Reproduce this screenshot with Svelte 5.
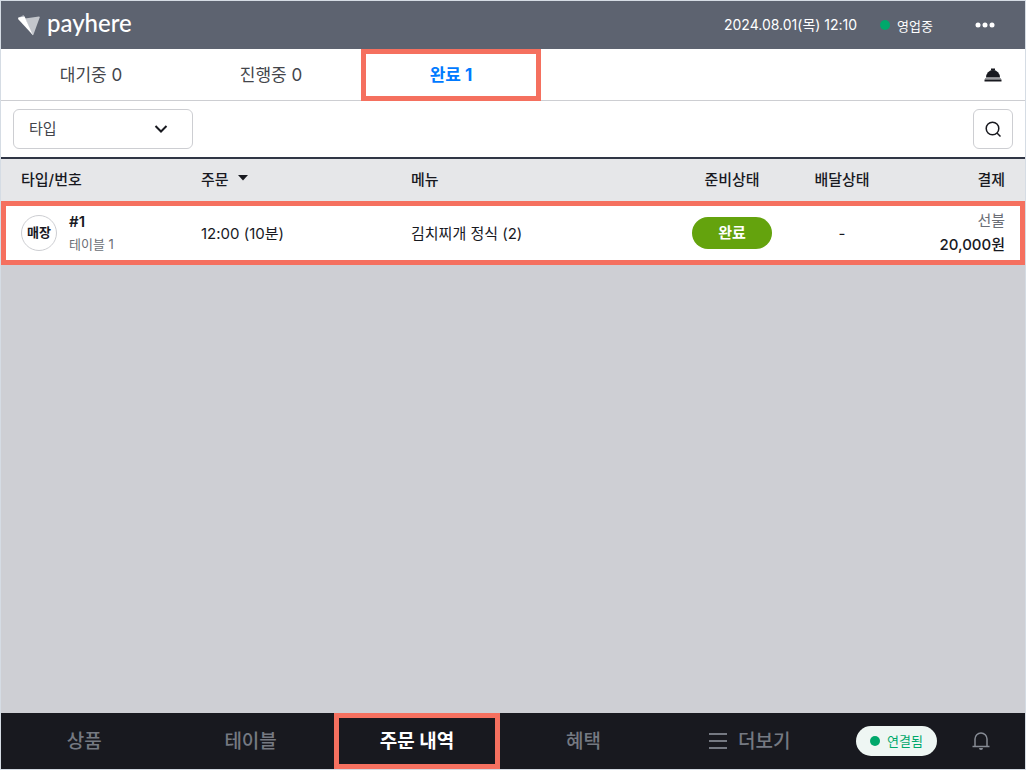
<script lang="ts">
	type Order = {
		id: number;
		type: string;
		table: string;
		time: string;
		menu: string;
		status: string;
		delivery: string;
		payType: string;
		amount: string;
	};

	const tabs = [
		{ label: '대기중', count: 0 },
		{ label: '진행중', count: 0 },
		{ label: '완료', count: 1 }
	];
	const navItems = ['상품', '테이블', '주문 내역', '혜택', '더보기'];

	const orders: Order[] = [
		{
			id: 1,
			type: '매장',
			table: '테이블 1',
			time: '12:00 (10분)',
			menu: '김치찌개 정식 (2)',
			status: '완료',
			delivery: '-',
			payType: '선불',
			amount: '20,000원'
		}
	];

	let activeTab = $state(2);
	let activeNav = $state(2);
</script>

<div class="app">
	<header>
		<a class="logo" href="#home">
			<svg width="24" height="24" viewBox="0 0 24 24" aria-hidden="true">
				<path d="M1 5 6.500 2 9 6Z" fill="#a9aeb7" />
				<path d="M8 5.500 22 3.500Q23.500 3.500 22.500 5L16.500 21.500Q16 23 15 21.500Z" fill="#c3c6cc" />
				<path d="M1.500 4.500 7.500 3.500 15.800 22 1.500 6.500Q0.500 5 1.500 4.500Z" fill="#fff" />
			</svg>
			<span>payhere</span>
		</a>
		<time datetime="2024-08-01T12:10">2024.08.01(목) 12:10</time>
		<span class="open"><i class="dot"></i>영업중</span>
		<button class="icon-button more" aria-label="메뉴 열기">
			<svg width="20" height="6" viewBox="0 0 20 6" fill="#fff">
				<circle cx="3" cy="3" r="2.500" />
				<circle cx="10" cy="3" r="2.500" />
				<circle cx="17" cy="3" r="2.500" />
			</svg>
		</button>
	</header>

	<div class="tabs">
		{#each tabs as tab, i (tab.label)}
			<button class="tab" class:active={activeTab === i} onclick={() => (activeTab = i)}>
				{tab.label} {tab.count}
			</button>
		{/each}
		<button class="icon-button bell-desk" aria-label="호출">
			<svg width="18" height="14" viewBox="0 0 18 14">
				<path d="M7 0.500h4v2H7z" fill="#18191f" />
				<path d="M2 9.500a7 7.500 0 0 1 14 0z" fill="#18191f" />
				<path d="M1 10h16v1.500H1z" fill="#9b9da1" />
				<path d="M0.500 11.500h17v2H0.500z" fill="#18191f" />
			</svg>
		</button>
	</div>

	<div class="filters">
		<div class="select">
			<select aria-label="타입">
				<option>타입</option>
			</select>
			<svg width="14" height="10" viewBox="0 0 14 10" fill="none" aria-hidden="true">
				<path d="m1.500 2 5.500 5.500L12.500 2" stroke="#18191f" stroke-width="2" />
			</svg>
		</div>
		<button class="search" aria-label="검색">
			<svg width="16" height="16" viewBox="0 0 16 16" fill="none" stroke="#18191f" stroke-width="1.500">
				<circle cx="7.500" cy="7.500" r="6.300" />
				<path d="m12 12 3.500 3.500" />
			</svg>
		</button>
	</div>

	<main>
		<table>
			<thead>
				<tr>
					<th class="col-type">타입/번호</th>
					<th class="col-time">
						<button class="sort">
							주문
							<svg width="10" height="6" viewBox="0 0 10 6" aria-hidden="true">
								<path d="M0 0h10L5 5.500z" fill="#18191f" />
							</svg>
						</button>
					</th>
					<th>메뉴</th>
					<th class="col-status">준비상태</th>
					<th class="col-status">배달상태</th>
					<th class="col-pay">결제</th>
				</tr>
			</thead>
			<tbody>
				{#each orders as order (order.id)}
					<tr class="highlight">
						<td>
							<div class="order">
								<span class="type">{order.type}</span>
								<div>
									<strong>#{order.id}</strong>
									<small>{order.table}</small>
								</div>
							</div>
						</td>
						<td>{order.time}</td>
						<td>{order.menu}</td>
						<td class="col-status"><span class="badge">{order.status}</span></td>
						<td class="col-status">{order.delivery}</td>
						<td class="col-pay">
							<span class="pay-type">{order.payType}</span>
							<span class="amount">{order.amount}</span>
						</td>
					</tr>
				{/each}
			</tbody>
		</table>
	</main>

	<nav>
		{#each navItems as item, i (item)}
			<button class="nav-item" class:active={activeNav === i} onclick={() => (activeNav = i)}>
				{#if item === '더보기'}
					<svg width="18" height="16" viewBox="0 0 18 16" stroke="currentColor" stroke-width="1.800" aria-hidden="true">
						<path d="M0 1h18M0 8h18M0 15h18" />
					</svg>
				{/if}
				<span>{item}</span>
			</button>
		{/each}
		<div class="nav-side">
			<span class="connected"><i class="dot"></i>연결됨</span>
			<button class="icon-button" aria-label="알림">
				<svg width="18" height="20" viewBox="0 0 18 20" fill="none" stroke="#868b94" stroke-width="1.500">
					<path d="M0.500 15.500h17M3 15.500V8a6 6 0 0 1 12 0v7.500" />
					<path d="M7 17a2 2 0 0 0 4 0z" fill="#868b94" stroke="none" />
				</svg>
			</button>
		</div>
	</nav>
</div>

<style>
	:global(body) {
		margin: 0;
	}

	.app {
		box-sizing: border-box;
		min-height: 100vh;
		display: flex;
		flex-direction: column;
		border: 1px solid #d5dce4;
		background: #fff;
		color: #18191f;
		font-family: Inter, 'Noto Sans CJK KR', sans-serif;
		font-size: 15px;
	}

	button,
	select {
		border: 0;
		padding: 0;
		background: none;
		color: inherit;
		font: inherit;
		cursor: pointer;
	}

	svg {
		display: block;
		flex: none;
	}

	.icon-button {
		display: flex;
		align-items: center;
		justify-content: center;
		width: 40px;
		height: 40px;
	}

	.dot {
		width: 10px;
		height: 10px;
		border-radius: 50%;
		background: #00a86b;
	}

	header {
		display: flex;
		align-items: center;
		height: 48px;
		padding: 0 20px 0 16px;
		background: #5d6370;
		color: #fff;
		font-size: 14px;
	}

	header time {
		padding-bottom: 2px;
	}

	.logo {
		display: flex;
		align-items: center;
		gap: 6px;
		margin-right: auto;
		color: #fff;
		font-family: Lato, sans-serif;
		font-size: 24px;
		font-weight: 500;
		line-height: 24px;
		text-decoration: none;
	}

	.logo span {
		padding-bottom: 4px;
	}

	.open {
		display: flex;
		align-items: center;
		gap: 7px;
		margin: 0 32px 0 23px;
		font-size: 13px;
	}

	.tabs {
		display: flex;
		align-items: center;
		height: 51px;
		border-bottom: 1px solid #cdced2;
	}

	.tab {
		width: 180px;
		height: 52px;
		margin-bottom: -1px;
		padding-bottom: 4px;
		color: #43454b;
		font-size: 17px;
	}

	.tab.active {
		outline: 5px solid #f5705f;
		outline-offset: -5px;
		color: #007aff;
		font-weight: 700;
	}

	.bell-desk {
		margin: 0 12px 0 auto;
	}

	.filters {
		display: flex;
		align-items: center;
		justify-content: space-between;
		height: 56px;
		padding: 0 12px;
		border-bottom: 2px solid #303645;
	}

	.select {
		position: relative;
	}

	.select select {
		display: block;
		width: 180px;
		height: 40px;
		padding: 0 15px 2px;
		border: 1px solid #cdced2;
		border-radius: 6px;
		color: #43454b;
		appearance: none;
	}

	.select svg {
		position: absolute;
		top: 15px;
		right: 25px;
		pointer-events: none;
	}

	.search {
		display: flex;
		align-items: center;
		justify-content: center;
		width: 40px;
		height: 40px;
		border: 1px solid #cdced2;
		border-radius: 6px;
	}

	main {
		flex: 1;
		background: #cecfd4;
	}

	table {
		width: 100%;
		border-collapse: collapse;
		table-layout: fixed;
	}

	th,
	td {
		padding: 0 20px 2px;
		text-align: left;
	}

	th {
		height: 38px;
		padding-bottom: 4px;
		background: #e6e7e9;
		font-weight: 500;
	}

	td {
		height: 62px;
		background: #fff;
	}

	.col-type {
		width: 140px;
	}

	.col-time {
		width: 170px;
	}

	.col-status {
		width: 110px;
		padding-right: 0;
		padding-left: 0;
		text-align: center;
	}

	.col-pay {
		width: 88px;
		text-align: right;
	}

	td.col-status,
	td.col-pay,
	td:first-child {
		height: 64px;
		padding-bottom: 0;
	}

	.highlight {
		outline: 5px solid #f5705f;
		outline-offset: -5px;
	}

	.sort {
		display: flex;
		align-items: center;
		gap: 9px;
	}

	.order {
		display: flex;
		align-items: center;
		gap: 12px;
	}

	.type {
		box-sizing: border-box;
		width: 36px;
		height: 36px;
		border: 1px solid #cdced2;
		border-radius: 50%;
		font-size: 13px;
		font-weight: 700;
		line-height: 33px;
		text-align: center;
	}

	.order strong,
	.order small {
		display: block;
		line-height: 22px;
	}

	.order strong {
		font-weight: 600;
	}

	.order small {
		color: #6b6e76;
		font-size: 13px;
	}

	.badge {
		display: inline-block;
		width: 80px;
		border-radius: 16px;
		background: #64a30d;
		color: #fff;
		font-weight: 700;
		line-height: 32px;
		vertical-align: middle;
	}

	.pay-type,
	.amount {
		display: block;
		line-height: 24px;
	}

	.pay-type {
		color: #6b6e76;
	}

	.amount {
		font-weight: 500;
		white-space: nowrap;
	}

	nav {
		display: flex;
		height: 56px;
		background: #18191f;
	}

	.nav-item {
		flex: 1;
		display: flex;
		align-items: center;
		justify-content: center;
		gap: 11px;
		color: #757982;
		font-size: 19px;
		font-weight: 500;
	}

	.nav-item span {
		padding-bottom: 4px;
	}

	.nav-item.active {
		outline: 5px solid #f5705f;
		outline-offset: -5px;
		color: #fff;
		font-weight: 700;
	}

	.nav-side {
		display: flex;
		align-items: center;
		justify-content: space-between;
		box-sizing: border-box;
		width: 192px;
		padding: 0 24px 0 23px;
	}

	.connected {
		display: flex;
		align-items: center;
		justify-content: center;
		gap: 7px;
		width: 81px;
		height: 30px;
		border-radius: 15px;
		background: #eef6f3;
		color: #00a86b;
		font-size: 13px;
		line-height: 26px;
	}
</style>
